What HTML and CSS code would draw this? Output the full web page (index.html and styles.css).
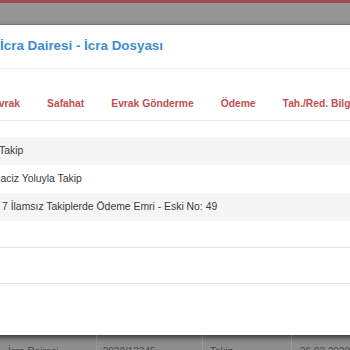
FILE: index.html
```html
<!DOCTYPE html>
<html lang="tr">
<head>
<meta charset="utf-8">
<link rel="stylesheet" href="styles.css">
</head>
<body>
<div class="page">
  <div class="topbar"></div>
  <div class="pagehead"></div>
  <div class="modal">
    <div class="modal-header">
      <h4 class="modal-title">İcra Dairesi - İcra Dosyası</h4>
    </div>
    <div class="modal-body">
      <ul class="tabs">
        <li class="tab">Evrak</li>
        <li class="tab">Safahat</li>
        <li class="tab">Evrak Gönderme</li>
        <li class="tab">Ödeme</li>
        <li class="tab">Tah./Red. Bilgileri</li>
      </ul>
      <div class="rows">
        <div class="row row-a odd">Takip</div>
        <div class="row row-b">Haciz Yoluyla Takip</div>
        <div class="row row-c odd">7 İlamsız Takiplerde Ödeme Emri - Eski No: 49</div>
      </div>
      <div class="spacer"></div>
      <div class="divider"></div>
      <div class="spacer2"></div>
      <div class="divider"></div>
    </div>
  </div>
  <div class="under">
    <div class="cell c1">İcra Dairesi</div>
    <div class="cell c2">2020/12345</div>
    <div class="cell c3">Takip</div>
    <div class="cell c4">26.03.2020</div>
  </div>
</div>
</body>
</html>
```
FILE: styles.css
```css
html, body {
  margin: 0;
  padding: 0;
}
body {
  width: 350px;
  height: 350px;
  overflow: hidden;
  background: #939393;
  font-family: "Liberation Sans", Arial, sans-serif;
}
.page {
  width: 350px;
  height: 350px;
  overflow: hidden;
  display: flex;
  flex-direction: column;
}
.topbar {
  height: 3px;
  background: #9d4d4d;
  flex: none;
}
.pagehead {
  height: 21px;
  background: #959595;
  flex: none;
}
.modal {
  flex: none;
  height: 311px;
  box-sizing: border-box;
  border-top: 1px solid #777;
  background: #fff;
  width: 420px;
  margin-left: -20px;
  box-shadow: 0 3px 6px rgba(0, 0, 0, 0.45);
  position: relative;
  z-index: 1;
}
.modal-header {
  height: 44px;
  box-sizing: border-box;
  padding: 13px 0 0 20px;
  border-bottom: 1px solid #eeeeee;
}
.modal-title {
  margin: 0;
  font-size: 13.4px;
  line-height: 16px;
  font-weight: bold;
  color: #3c8dcf;
}
.tabs {
  list-style: none;
  margin: 18px 0 0 0;
  padding: 0 0 0 12px;
  display: flex;
  gap: 27px;
  border-bottom: 1px solid #e6e6e6;
  white-space: nowrap;
}
.tab {
  font-size: 10.3px;
  line-height: 14px;
  font-weight: bold;
  color: #c0504f;
  padding: 9.5px 0 9.5px 0;
}
.rows {
  margin-top: 16px;
}
.row {
  height: 28px;
  line-height: 28px;
  font-size: 10.4px;
  color: #3a3a3a;
  white-space: nowrap;
}
.odd {
  background: #f5f5f5;
}
.row-a { padding-left: 19px; }
.row-b { padding-left: 13px; }
.row-c { padding-left: 22px; }
.spacer {
  height: 26px;
}
.divider {
  height: 1px;
  background: #e2e2e2;
}
.spacer2 {
  height: 35px;
}
.under {
  flex: 1;
  display: flex;
  background: linear-gradient(#6e6e6e, #8e8e8e 5px, #8e8e8e);
  color: #4a4a4a;
  font-size: 10px;
  line-height: 12px;
}
.cell {
  padding: 11px 0 0 8px;
  box-sizing: border-box;
  white-space: nowrap;
  border-right: 1px solid #9c9c9c;
}
.c1 { width: 100px; }
.c2 { width: 110px; padding-left: 6px; }
.c3 { width: 92px; padding-left: 7px; }
.c4 { flex: 1; border-right: 0; }
```
